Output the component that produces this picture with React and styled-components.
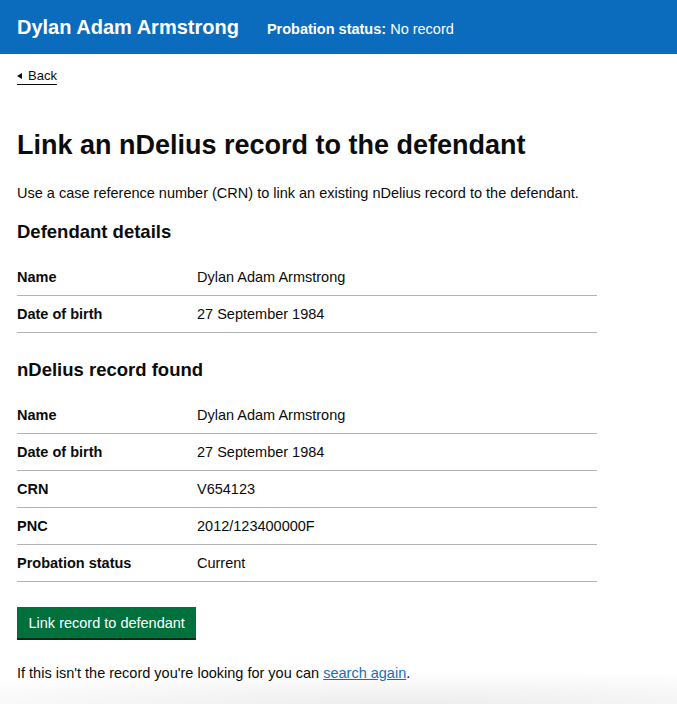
import styled, { createGlobalStyle } from 'styled-components';

const GlobalStyle = createGlobalStyle`
  body {
    margin: 0;
    font-family: "Liberation Sans", Arial, sans-serif;
    color: #0b0c0c;
    background: #ffffff;
  }
`;

const defendant = [
  { key: 'Name', value: 'Dylan Adam Armstrong' },
  { key: 'Date of birth', value: '27 September 1984' },
];

const record = [
  { key: 'Name', value: 'Dylan Adam Armstrong' },
  { key: 'Date of birth', value: '27 September 1984' },
  { key: 'CRN', value: 'V654123' },
  { key: 'PNC', value: '2012/123400000F' },
  { key: 'Probation status', value: 'Current' },
];

function SummaryList({ rows }) {
  return (
    <List>
      {rows.map((row) => (
        <Row key={row.key}>
          <Key>{row.key}</Key>
          <Value>{row.value}</Value>
        </Row>
      ))}
    </List>
  );
}

export default function App() {
  return (
    <>
      <GlobalStyle />
      <Header>
        <HeaderName>Dylan Adam Armstrong</HeaderName>
        <HeaderStatus>
          <strong>Probation status:</strong> No record
        </HeaderStatus>
      </Header>
      <Main>
        <BackLink href="#">Back</BackLink>
        <Title>Link an nDelius record to the defendant</Title>
        <Body>
          Use a case reference number (CRN) to link an existing nDelius record to the defendant.
        </Body>
        <SectionHeading>Defendant details</SectionHeading>
        <SummaryList rows={defendant} />
        <SectionHeading $spaced>nDelius record found</SectionHeading>
        <SummaryList rows={record} />
        <Button type="button">Link record to defendant</Button>
        <Footnote>
          If this isn't the record you're looking for you can <Link href="#">search again</Link>.
        </Footnote>
      </Main>
      <BottomShade />
    </>
  );
}

const Header = styled.header`
  display: flex;
  align-items: center;
  gap: 28px;
  height: 54px;
  padding: 0 17px;
  background: #0b6cbd;
  color: #ffffff;
`;

const HeaderName = styled.span`
  font-size: 20px;
  font-weight: bold;
`;

const HeaderStatus = styled.span`
  font-size: 14.5px;
  padding-top: 3px;
`;

const Main = styled.main`
  display: flex;
  flex-direction: column;
  align-items: flex-start;
  padding: 0 17px 40px;
`;

const BackLink = styled.a`
  margin-top: 14px;
  position: relative;
  padding-left: 11px;
  font-size: 13px;
  line-height: 16px;
  color: #0b0c0c;
  text-decoration: none;
  border-bottom: 1px solid #0b0c0c;

  &::before {
    content: '';
    position: absolute;
    left: 0;
    top: 5px;
    border-style: solid;
    border-width: 3.5px 5px 3.5px 0;
    border-color: transparent #0b0c0c transparent transparent;
  }
`;

const Title = styled.h1`
  margin: 40px 0 18px;
  font-size: 27px;
  line-height: 40px;
  font-weight: bold;
`;

const Body = styled.p`
  margin: 0;
  font-size: 14.5px;
  line-height: 20px;
`;

const SectionHeading = styled.h2`
  margin: ${(p) => (p.$spaced ? '24px' : '16px')} 0 15px;
  font-size: 18.5px;
  line-height: 25px;
  font-weight: bold;
`;

const List = styled.dl`
  margin: 0;
  width: 580px;
`;

const Row = styled.div`
  display: flex;
  padding: 8px 0;
  border-bottom: 1px solid #b1b4b6;
  font-size: 14.5px;
  line-height: 20px;
`;

const Key = styled.dt`
  width: 180px;
  font-weight: bold;
`;

const Value = styled.dd`
  margin: 0;
`;

const Button = styled.button`
  margin-top: 25px;
  padding: 6px 11.5px 5px;
  border: 0;
  border-radius: 0;
  background: #00703c;
  box-shadow: 0 2px 0 #002d18;
  color: #ffffff;
  font-family: inherit;
  font-size: 14.5px;
  line-height: 20px;
  cursor: pointer;
`;

const Footnote = styled.p`
  margin: 25px 0 0;
  font-size: 14.5px;
  line-height: 20px;
`;

const Link = styled.a`
  color: #1d70b8;
  text-decoration: underline;
`;

const BottomShade = styled.div`
  position: fixed;
  left: 0;
  right: 0;
  bottom: 0;
  height: 34px;
  pointer-events: none;
  background: radial-gradient(ellipse 90% 100% at 60% 100%, rgba(0, 0, 0, 0.07), rgba(0, 0, 0, 0));
`;
